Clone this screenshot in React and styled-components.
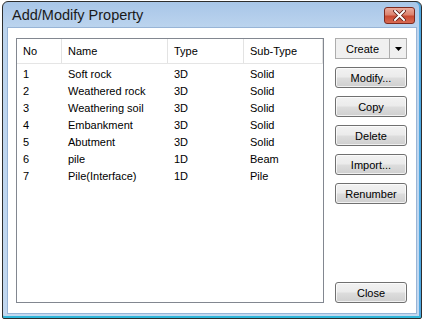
import React from "react";
import styled, { createGlobalStyle } from "styled-components";

const GlobalStyle = createGlobalStyle`
  html, body {
    margin: 0;
    padding: 0;
    background: #ffffff;
  }
  body {
    font-family: Tahoma, "Liberation Sans", Arial, sans-serif;
  }
`;

const Page = styled.div`
  width: 423px;
  height: 320px;
  padding: 1px 1px 1px 2px;
  box-sizing: border-box;
`;

const Window = styled.div`
  width: 100%;
  height: 100%;
  box-sizing: border-box;
  border: 1px solid #2d2d2d;
  border-radius: 6px 6px 2px 2px;
  background: linear-gradient(to bottom, #a8c6e8 0px, #bcd4ee 26px, #c2d8f0 100%);
  display: flex;
  flex-direction: column;
  padding: 0 4px 4px 4px;
  box-shadow: inset 0 -2px 0 #2fb6d9, inset -2px 0 0 #4fa7e0;
`;

const TitleBar = styled.div`
  height: 26px;
  display: flex;
  align-items: center;
  justify-content: space-between;
  padding-left: 5px;
`;

const Title = styled.span`
  font-family: "Liberation Sans", Arial, sans-serif;
  font-size: 14.5px;
  color: #1a1a1a;
  margin-top: 1px;
`;

const CloseX = styled.div`
  width: 31px;
  height: 17px;
  margin-right: 2px;
  margin-top: 1px;
  box-sizing: border-box;
  border: 1px solid #7c2a1f;
  border-radius: 3px;
  background: linear-gradient(to bottom, #ebaa9c 0%, #dc836f 45%, #c94a32 55%, #d86a52 100%);
  display: flex;
  align-items: center;
  justify-content: center;
`;

const Client = styled.div`
  flex: 1;
  background: #ffffff;
  border: 1px solid #98b4d6;
  display: flex;
  gap: 11px;
  padding: 10px 8px 10px 8px;
`;

const ListBox = styled.div`
  width: 308px;
  height: 265px;
  box-sizing: border-box;
  border: 1px solid #828790;
  background: #ffffff;
  font-family: "Liberation Sans", Arial, sans-serif;
  font-size: 11px;
  color: #000;
`;

const Row = styled.div`
  display: grid;
  grid-template-columns: 45px 106px 76px 1fr;
  height: ${(p) => (p.$header ? "24px" : "17px")};
  align-items: center;
  border-bottom: ${(p) => (p.$header ? "1px solid #e5e5e5" : "none")};
  margin-bottom: ${(p) => (p.$header ? "1px" : "0")};
`;

const Cell = styled.div`
  padding-left: 6px;
  height: 100%;
  display: flex;
  align-items: center;
  white-space: nowrap;
  border-right: ${(p) => (p.$sep ? "1px solid #e3e3e3" : "none")};
`;

const ButtonColumn = styled.div`
  width: 72px;
  display: flex;
  flex-direction: column;
  gap: 8px;
  height: 265px;
`;

const Button = styled.div`
  height: 21px;
  box-sizing: border-box;
  border: 1px solid #707070;
  border-radius: 3px;
  background: linear-gradient(to bottom, #f2f2f2 0%, #ebebeb 48%, #dddddd 52%, #cfcfcf 100%);
  box-shadow: inset 0 0 0 1px rgba(255, 255, 255, 0.7);
  display: flex;
  align-items: center;
  justify-content: center;
  font-family: "Liberation Sans", Arial, sans-serif;
  font-size: 11px;
  color: #000;
  margin-top: ${(p) => (p.$bottom ? "auto" : "0")};
`;

const SplitButton = styled.div`
  height: 21px;
  box-sizing: border-box;
  border: 1px solid #adadad;
  background: #f0f0f0;
  display: flex;
  font-family: "Liberation Sans", Arial, sans-serif;
  font-size: 11px;
  color: #000;
`;

const SplitMain = styled.div`
  flex: 1;
  display: flex;
  align-items: center;
  justify-content: center;
  border-right: 1px solid #adadad;
`;

const SplitArrow = styled.div`
  width: 16px;
  display: flex;
  align-items: center;
  justify-content: center;
`;

const rows = [
  ["1", "Soft rock", "3D", "Solid"],
  ["2", "Weathered rock", "3D", "Solid"],
  ["3", "Weathering soil", "3D", "Solid"],
  ["4", "Embankment", "3D", "Solid"],
  ["5", "Abutment", "3D", "Solid"],
  ["6", "pile", "1D", "Beam"],
  ["7", "Pile(Interface)", "1D", "Pile"],
];

export default function App() {
  return (
    <>
      <GlobalStyle />
      <Page>
        <Window>
          <TitleBar>
            <Title>Add/Modify Property</Title>
            <CloseX>
              <svg width="13" height="11" viewBox="0 0 13 11">
                <path
                  d="M2 1 L11 10 M11 1 L2 10"
                  stroke="#5a1a12"
                  strokeWidth="3.6"
                  strokeLinecap="square"
                />
                <path
                  d="M2 1 L11 10 M11 1 L2 10"
                  stroke="#ffffff"
                  strokeWidth="2"
                  strokeLinecap="square"
                />
              </svg>
            </CloseX>
          </TitleBar>
          <Client>
            <ListBox>
              <Row $header>
                <Cell $sep>No</Cell>
                <Cell $sep>Name</Cell>
                <Cell $sep>Type</Cell>
                <Cell $sep>Sub-Type</Cell>
              </Row>
              {rows.map((r) => (
                <Row key={r[0]}>
                  <Cell>{r[0]}</Cell>
                  <Cell>{r[1]}</Cell>
                  <Cell>{r[2]}</Cell>
                  <Cell>{r[3]}</Cell>
                </Row>
              ))}
            </ListBox>
            <ButtonColumn>
              <SplitButton>
                <SplitMain>Create</SplitMain>
                <SplitArrow>
                  <svg width="7" height="4" viewBox="0 0 7 4">
                    <path d="M0 0 H7 L3.5 4 Z" fill="#000" />
                  </svg>
                </SplitArrow>
              </SplitButton>
              <Button>Modify...</Button>
              <Button>Copy</Button>
              <Button>Delete</Button>
              <Button>Import...</Button>
              <Button>Renumber</Button>
              <Button $bottom>Close</Button>
            </ButtonColumn>
          </Client>
        </Window>
      </Page>
    </>
  );
}
